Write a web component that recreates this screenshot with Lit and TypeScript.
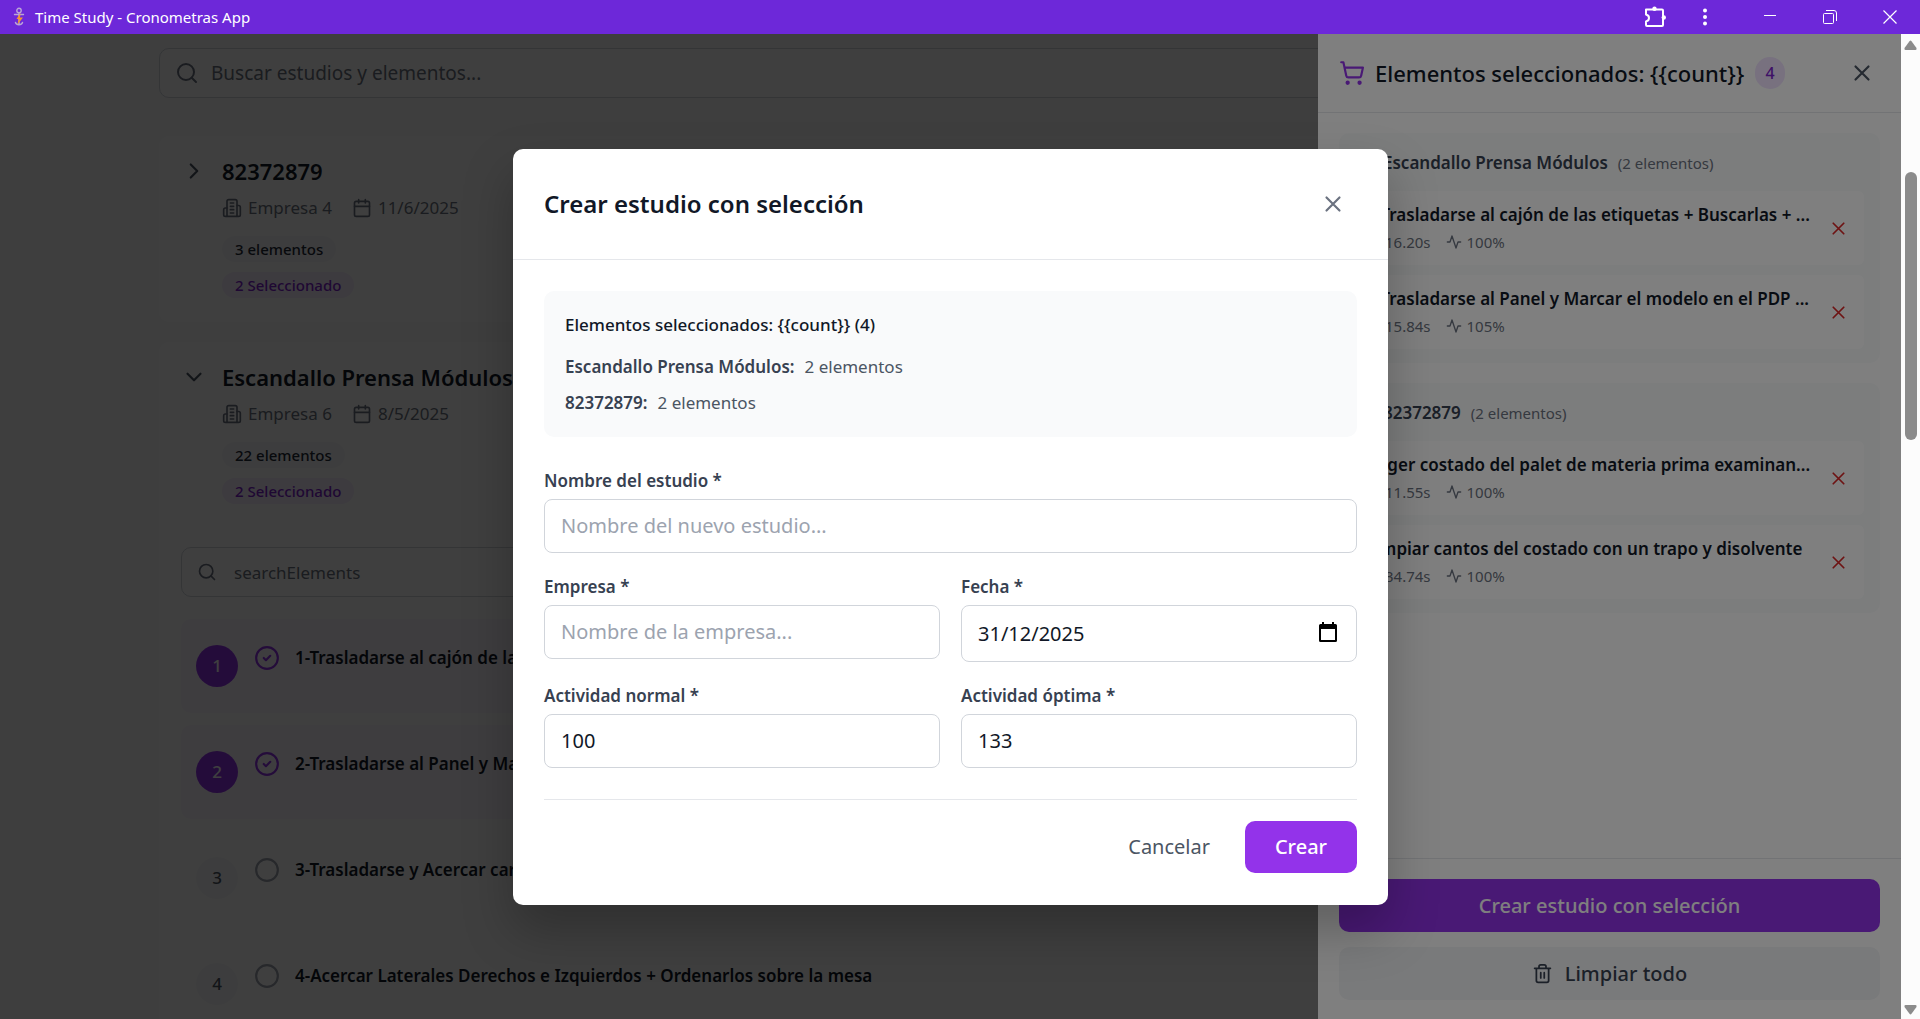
import { LitElement, html, css, svg } from "lit";
import { customElement } from "lit/decorators.js";
import { classMap } from "lit/directives/class-map.js";

const ICONS = {
  search: svg`<circle cx="11" cy="11" r="8"/><path d="m21 21-4.3-4.3"/>`,
  chevronRight: svg`<path d="m9 18 6-6-6-6"/>`,
  chevronDown: svg`<path d="m6 9 6 6 6-6"/>`,
  building: svg`<path d="M6 22V4a2 2 0 0 1 2-2h8a2 2 0 0 1 2 2v18Z"/><path d="M6 12H4a2 2 0 0 0-2 2v6a2 2 0 0 0 2 2h2"/><path d="M18 9h2a2 2 0 0 1 2 2v9a2 2 0 0 1-2 2h-2"/><path d="M10 6h4M10 10h4M10 14h4M10 18h4"/>`,
  calendar: svg`<path d="M8 2v4M16 2v4"/><rect x="3" y="4" width="18" height="18" rx="2"/><path d="M3 10h18"/>`,
  cart: svg`<circle cx="8" cy="21" r="1"/><circle cx="19" cy="21" r="1"/><path d="M2.05 2.05h2l2.66 12.42a2 2 0 0 0 2 1.58h9.78a2 2 0 0 0 1.95-1.57l1.65-7.43H5.12"/>`,
  close: svg`<path d="M18 6 6 18M6 6l12 12"/>`,
  activity: svg`<path d="M22 12h-4l-3 9L9 3l-3 9H2"/>`,
  clock: svg`<circle cx="12" cy="12" r="10"/><path d="M12 6v6l4 2"/>`,
  trash: svg`<path d="M3 6h18M19 6v14a2 2 0 0 1-2 2H7a2 2 0 0 1-2-2V6M8 6V4a2 2 0 0 1 2-2h4a2 2 0 0 1 2 2v2M10 11v6M14 11v6"/>`,
  circle: svg`<circle cx="12" cy="12" r="10"/>`,
  circleCheck: svg`<circle cx="12" cy="12" r="10"/><path d="m9 12 2 2 4-4"/>`,
};

const icon = (name: keyof typeof ICONS, size: number) => html`<svg
  width=${size} height=${size} viewBox="0 0 24 24" fill="none" stroke="currentColor"
  stroke-width="2" stroke-linecap="round" stroke-linejoin="round" aria-hidden="true"
>${ICONS[name]}</svg>`;

interface Study { name: string; company: string; date: string; count: number; open: boolean; }
interface Picked { name: string; time: string; rate: string; }

const STUDIES: Study[] = [
  { name: "82372879", company: "Empresa 4", date: "11/6/2025", count: 3, open: false },
  { name: "Escandallo Prensa Módulos", company: "Empresa 6", date: "8/5/2025", count: 22, open: true },
];

const ELEMENTS = [
  { n: 1, text: "1-Trasladarse al cajón de las etiquetas", on: true },
  { n: 2, text: "2-Trasladarse al Panel y Marcar el modelo", on: true },
  { n: 3, text: "3-Trasladarse y Acercar carro", on: false },
  { n: 4, text: "4-Acercar Laterales Derechos e Izquierdos + Ordenarlos sobre la mesa", on: false },
];

const GROUPS: { name: string; items: Picked[] }[] = [
  {
    name: "Escandallo Prensa Módulos",
    items: [
      { name: "1-Trasladarse al cajón de las etiquetas + Buscarlas + ...", time: "16.20s", rate: "100%" },
      { name: "2-Trasladarse al Panel y Marcar el modelo en el PDP ...", time: "15.84s", rate: "105%" },
    ],
  },
  {
    name: "82372879",
    items: [
      { name: "Coger costado del palet de materia prima examinan...", time: "11.55s", rate: "100%" },
      { name: "Limpiar cantos del costado con un trapo y disolvente", time: "34.74s", rate: "100%" },
    ],
  },
];

const base = css`
  *, *::before, *::after { box-sizing: border-box; }
  h1, h2, h3, p, ul { margin: 0; padding: 0; font-weight: inherit; font-size: inherit; }
  ul { list-style: none; }
  svg { display: block; flex: none; }
  button, input { font: inherit; color: inherit; margin: 0; }
  button { border: 0; padding: 0; background: none; display: flex; align-items: center; justify-content: center; white-space: nowrap; }
`;

@customElement("title-bar")
export class TitleBar extends LitElement {
  static styles = [base, css`
    :host { display: flex; align-items: center; height: 34px; padding-left: 10px; background: #6d28d9; color: #fff; }
    .name { flex: 1; margin-left: 8px; font-size: 15px; line-height: 20px; }
    .tool { width: 50px; height: 34px; }
    .window { display: flex; margin-left: 10px; }
    .window button { width: 60px; height: 34px; }
  `];
  render() {
    return html`
      <svg width="17" height="20" viewBox="0 0 17 20" fill="none" stroke-linecap="round" aria-hidden="true">
        <circle cx="9" cy="3.5" r="2.2" stroke="#b9a3d8" stroke-width="1.4"/>
        <path d="M4.500 7.500h9M9 6v11M5.500 15.500c1 3 6 3 7 0" stroke="#b9a3d8" stroke-width="1.400"/>
        <path d="M10.500 6 6.500 12h2.200L7.500 17.500 13 10.500H10Z" fill="#f59332"/>
      </svg>
      <span class="name">Time Study - Cronometras App</span>
      <button class="tool" aria-label="Extensiones">
        <svg width="24" height="24" viewBox="0 0 24 24" fill="none" stroke="#fff" stroke-width="2" stroke-linejoin="round">
          <path d="M3 4.500h16a1 1 0 0 1 1 1V20a1 1 0 0 1-1 1H4a1 1 0 0 1-1-1v-3.500c4-1 4-6 0-7Z"/>
          <circle cx="11.500" cy="3.700" r="2.200" fill="#fff" stroke="none"/><circle cx="20.800" cy="12.500" r="2.200" fill="#fff" stroke="none"/>
        </svg>
      </button>
      <button class="tool" aria-label="Menú">
        <svg width="6" height="18" viewBox="0 0 6 18" fill="#fff"><circle cx="3" cy="2.500" r="2"/><circle cx="3" cy="9" r="2"/><circle cx="3" cy="15.500" r="2"/></svg>
      </button>
      <div class="window">
        <button aria-label="Minimizar"><svg width="14" height="14" viewBox="0 0 14 14" stroke="#fff"><path d="M1 5.500h12"/></svg></button>
        <button aria-label="Restaurar"><svg width="14" height="14" viewBox="0 0 14 14" fill="none" stroke="#fff"><rect x=".5" y="3.500" width="10" height="10" rx="1"/><path d="M3 .5h8a2.500 2.500 0 0 1 2.500 2.500v8"/></svg></button>
        <button aria-label="Cerrar"><svg width="14" height="14" viewBox="0 0 14 14" stroke="#fff" stroke-width="1.200"><path d="m.5.5 13 13M13.500.5l-13 13"/></svg></button>
      </div>`;
  }
}

@customElement("study-list")
export class StudyList extends LitElement {
  static styles = [base, css`
    :host { display: block; height: 100%; overflow: hidden; padding: 14px 159px 0; color: #111827; }
    .search { display: flex; align-items: center; gap: 12px; height: 50px; padding: 0 15px; border: 1px solid #d1d5db; border-radius: 10px; background: #fff; color: #6b7280; }
    .search input { flex: 1; min-width: 0; border: 0; outline: 0; padding: 0; background: none; font-size: 19px; }
    .search input::placeholder { color: #6b7280; opacity: 1; }
    .card { margin-top: 20px; border-radius: 10px; background: #fff; }
    .search + .card { margin-top: 38px; }
    .head { display: grid; grid-template-columns: 26px 1fr; column-gap: 15px; padding: 18px 22px; min-height: 186px; }
    .toggle { width: 26px; height: 34px; color: #4b5563; }
    .info { display: grid; justify-items: start; align-content: start; }
    .title { font-size: 22px; font-weight: 600; line-height: 34px; }
    .meta { display: flex; gap: 20px; line-height: 28px; margin-top: 6px; font-size: 17px; color: #6b7280; }
    .meta span { display: flex; align-items: center; gap: 6px; }
    .pill { margin-top: 14px; padding: 0 13px; border-radius: 14px; background: #f6f7f9; color: #1f2937; font-size: 15px; font-weight: 500; line-height: 26px; }
    .pill + .pill { margin-top: 10px; background: #f5edff; color: #7e22ce; }
    .body { padding: 19px 22px; display: grid; gap: 12px; }
    .body .search { margin-bottom: 10px; gap: 17px; }
    .body .search input { font-size: 17px; }
    .item { display: flex; height: 94px; padding: 26px 15px; border-radius: 10px; background: #fff; font-size: 17px; font-weight: 600; }
    .item.on { background: #faf5ff; }
    .num { flex: none; width: 42px; height: 42px; border-radius: 50%; background: #f6f7f9; color: #4b5563; font-weight: 500; line-height: 42px; text-align: center; margin-right: 16px; }
    .on .num { background: #9333ea; color: #fff; }
    .mark { flex: none; height: 26px; width: 26px; color: #9ca3af; margin-right: 15px; }
    .on .mark { color: #9333ea; }
    .text { line-height: 26px; white-space: nowrap; }
  `];
  render() {
    return html`
      <label class="search">${icon("search", 24)}<input type="search" aria-label="Buscar" placeholder="Buscar estudios y elementos..."></label>
      ${STUDIES.map((s) => html`
        <section class="card">
          <div class="head">
            <button class="toggle" aria-label="Desplegar">${icon(s.open ? "chevronDown" : "chevronRight", 26)}</button>
            <div class="info">
              <h2 class="title">${s.name}</h2>
              <p class="meta"><span>${icon("building", 20)}${s.company}</span><span>${icon("calendar", 20)}${s.date}</span></p>
              <span class="pill">${s.count} elementos</span>
              <span class="pill">2 Seleccionado</span>
            </div>
          </div>
          ${s.open ? html`
            <div class="body">
              <label class="search">${icon("search", 20)}<input type="search" aria-label="Buscar elementos" placeholder="searchElements"></label>
              ${ELEMENTS.map((e) => html`
                <div class=${classMap({ item: true, on: e.on })}>
                  <span class="num">${e.n}</span>
                  <button class="mark" aria-label="Seleccionar">${icon(e.on ? "circleCheck" : "circle", 26)}</button>
                  <span class="text">${e.text}</span>
                </div>`)}
            </div>` : ""}
        </section>`)}`;
  }
}

@customElement("selection-drawer")
export class SelectionDrawer extends LitElement {
  static styles = [base, css`
    :host { display: flex; flex-direction: column; background: #fff; color: #111827; }
    .head { display: flex; align-items: center; height: 79px; padding: 0 26px 0 21px; border-bottom: 1px solid #e5e7eb; }
    .head .cart { color: #9333ea; margin-right: 10px; display: flex; }
    .title { font-size: 22px; font-weight: 500; white-space: nowrap; }
    .badge { width: 30px; height: 32px; margin-left: 11px; border-radius: 16px; background: #f0e3ff; color: #7e22ce; font-size: 16px; font-weight: 500; line-height: 32px; text-align: center; }
    .close { width: 26px; height: 26px; margin-left: auto; color: #4b5563; }
    .list { flex: 1; padding: 20px 21px; display: flex; flex-direction: column; gap: 20px; min-height: 0; }
    .group { border-radius: 10px; background: #f9fafb; padding: 15px 16px 14px; display: grid; gap: 10px; }
    .ghead { display: flex; align-items: center; gap: 10px; line-height: 30px; padding-bottom: 3px; font-size: 17px; font-weight: 600; color: #374151; }
    .ghead svg { color: #6b7280; margin-right: -2px; }
    .ghead small { font-size: 15px; font-weight: 400; color: #6b7280; }
    .item { display: flex; align-items: center; height: 74px; padding: 0 15px 0 11px; border-radius: 6px; background: #fff; }
    .main { flex: 1; min-width: 0; }
    .name { font-size: 17px; font-weight: 600; line-height: 28px; white-space: nowrap; }
    .stats { display: flex; gap: 15px; font-size: 15px; line-height: 27px; color: #6b7280; }
    .stats span { display: flex; align-items: center; gap: 5px; }
    .remove { width: 22px; height: 22px; color: #dc2626; }
    .foot { border-top: 1px solid #e5e7eb; padding: 20px 21px 19px; display: grid; gap: 15px; font-size: 20px; font-weight: 500; }
    .foot button { height: 53px; border-radius: 10px; gap: 12px; }
    .primary { background: #9333ea; color: #fff; }
    .muted { background: #f3f4f6; color: #374151; }
  `];
  render() {
    return html`
      <header class="head">
        <span class="cart">${icon("cart", 26)}</span>
        <h2 class="title">Elementos seleccionados: {{count}}</h2>
        <span class="badge">4</span>
        <button class="close" aria-label="Cerrar">${icon("close", 26)}</button>
      </header>
      <div class="list">
        ${GROUPS.map((g) => html`
          <section class="group">
            <h3 class="ghead">${icon("building", 20)}${g.name}<small>(${g.items.length} elementos)</small></h3>
            ${g.items.map((i) => html`
              <div class="item">
                <div class="main">
                  <p class="name">${i.name}</p>
                  <p class="stats"><span>${icon("clock", 14)}${i.time}</span><span>${icon("activity", 16)}${i.rate}</span></p>
                </div>
                <button class="remove" aria-label="Quitar">${icon("close", 21)}</button>
              </div>`)}
          </section>`)}
      </div>
      <footer class="foot">
        <button class="primary">Crear estudio con selección</button>
        <button class="muted">${icon("trash", 21)}Limpiar todo</button>
      </footer>`;
  }
}

@customElement("create-dialog")
export class CreateDialog extends LitElement {
  static styles = [base, css`
    :host { display: block; width: 100%; max-width: 875px; border-radius: 10px; background: #fff; color: #111827; box-shadow: 0 25px 50px rgba(0, 0, 0, 0.25); }
    .head { display: flex; align-items: center; justify-content: space-between; height: 111px; padding: 0 42px 0 31px; border-bottom: 1px solid #e5e7eb; }
    .title { font-size: 24px; font-weight: 600; }
    .close { width: 26px; height: 26px; color: #6b7280; }
    .body { padding: 31px 31px 32px; display: grid; gap: 31px; }
    .summary { padding: 21px; border-radius: 10px; background: #f9fafb; font-size: 17px; line-height: 26px; height: 146px; }
    .lead { font-weight: 500; margin-bottom: 16px; }
    .line { color: #4b5563; margin-bottom: 10px; display: flex; gap: 10px; }
    .line b { font-weight: 600; color: #374151; }
    .fields { display: grid; grid-template-columns: 1fr 1fr; gap: 21px; align-items: start; }
    .field { display: grid; gap: 5px; }
    .wide { grid-column: 1 / -1; }
    .field label { font-size: 17px; font-weight: 600; line-height: 26px; color: #374151; }
    .field input { width: 100%; min-width: 0; height: 54px; padding: 0 16px; border: 1px solid #d1d5db; border-radius: 8px; background: #fff; font-size: 20px; outline: 0; }
    .field input::placeholder { color: #9ca3af; opacity: 1; }
    .date { display: flex; align-items: center; height: 57px; padding-right: 18px; border: 1px solid #d1d5db; border-radius: 8px; }
    .date .date-text { flex: 1; border: 0; height: 50px; background: none; }
    .foot { display: flex; justify-content: flex-end; gap: 9px; padding-top: 21px; border-top: 1px solid #e5e7eb; font-size: 20px; }
    .foot button { height: 52px; padding: 0 26px; border-radius: 10px; color: #4b5563; }
    .foot .primary { min-width: 112px; background: #9333ea; color: #fff; font-weight: 500; }
  `];
  render() {
    return html`
      <header class="head">
        <h1 class="title">Crear estudio con selección</h1>
        <button class="close" aria-label="Cerrar">${icon("close", 26)}</button>
      </header>
      <form class="body">
        <section class="summary">
          <p class="lead">Elementos seleccionados: {{count}} (4)</p>
          ${GROUPS.map((g) => html`<p class="line"><b>${g.name}:</b>${g.items.length} elementos</p>`)}
        </section>
        <div class="fields">
          <div class="field wide"><label for="name">Nombre del estudio *</label><input id="name" type="text" placeholder="Nombre del nuevo estudio..."></div>
          <div class="field"><label for="company">Empresa *</label><input id="company" type="text" placeholder="Nombre de la empresa..."></div>
          <div class="field"><label for="date">Fecha *</label>
            <div class="date">
              <input class="date-text" id="date" type="text" value="31/12/2025">
              <button type="button" aria-label="Abrir calendario">
                <svg width="20" height="22" viewBox="0 0 20 22" aria-hidden="true"><path d="M4 0h2v2h8V0h2v2h1.500A1.500 1.500 0 0 1 19 3.500v15a1.500 1.500 0 0 1-1.500 1.500h-15A1.500 1.500 0 0 1 1 18.500v-15A1.500 1.500 0 0 1 2.500 2H4ZM3 7v11h14V7Z" fill="#000" fill-rule="evenodd"/></svg>
              </button>
            </div>
          </div>
          <div class="field"><label for="normal">Actividad normal *</label><input id="normal" type="text" inputmode="numeric" value="100"></div>
          <div class="field"><label for="optimal">Actividad óptima *</label><input id="optimal" type="text" inputmode="numeric" value="133"></div>
        </div>
        <footer class="foot">
          <button type="button">Cancelar</button>
          <button type="button" class="primary">Crear</button>
        </footer>
      </form>`;
  }
}

@customElement("app-root")
export class AppRoot extends LitElement {
  static styles = [base, css`
    :host { display: grid; grid-template-rows: auto 1fr; height: 100vh; overflow: hidden; font-family: "Noto Sans", "Open Sans", sans-serif; }
    .frame { display: grid; grid-template-columns: 1fr 19px; min-height: 0; }
    .view { position: relative; overflow: hidden; background: #f9fafb; min-height: 0; }
    .shade { position: absolute; inset: 0; background: rgba(0, 0, 0, 0.5); display: flex; }
    .side { justify-content: flex-end; }
    .side selection-drawer { width: 583px; max-width: 100%; }
    .center { align-items: center; justify-content: center; }
    .scroll { display: flex; flex-direction: column; align-items: center; background: #fcfcfc; padding: 6px 0 4px; color: #8b8b8b; }
    .thumb { width: 12px; height: 268px; margin: 122px 0 auto; border-radius: 6px; background: #8b8b8b; }
  `];
  render() {
    return html`
      <title-bar></title-bar>
      <div class="frame">
        <div class="view">
          <study-list></study-list>
          <div class="shade side"><selection-drawer></selection-drawer></div>
          <div class="shade center"><create-dialog></create-dialog></div>
        </div>
        <div class="scroll" aria-hidden="true">
          <svg width="13" height="10" viewBox="0 0 13 10" fill="currentColor"><path d="M5.500 1.200Q6.500 0 7.500 1.200L12.500 8Q13 10 11.500 10h-10Q0 10 .5 8Z"/></svg>
          <div class="thumb"></div>
          <svg width="13" height="10" viewBox="0 0 13 10" fill="currentColor"><path d="M5.500 8.800Q6.500 10 7.500 8.800L12.500 2Q13 0 11.500 0h-10Q0 0 .5 2Z"/></svg>
        </div>
      </div>`;
  }
}
